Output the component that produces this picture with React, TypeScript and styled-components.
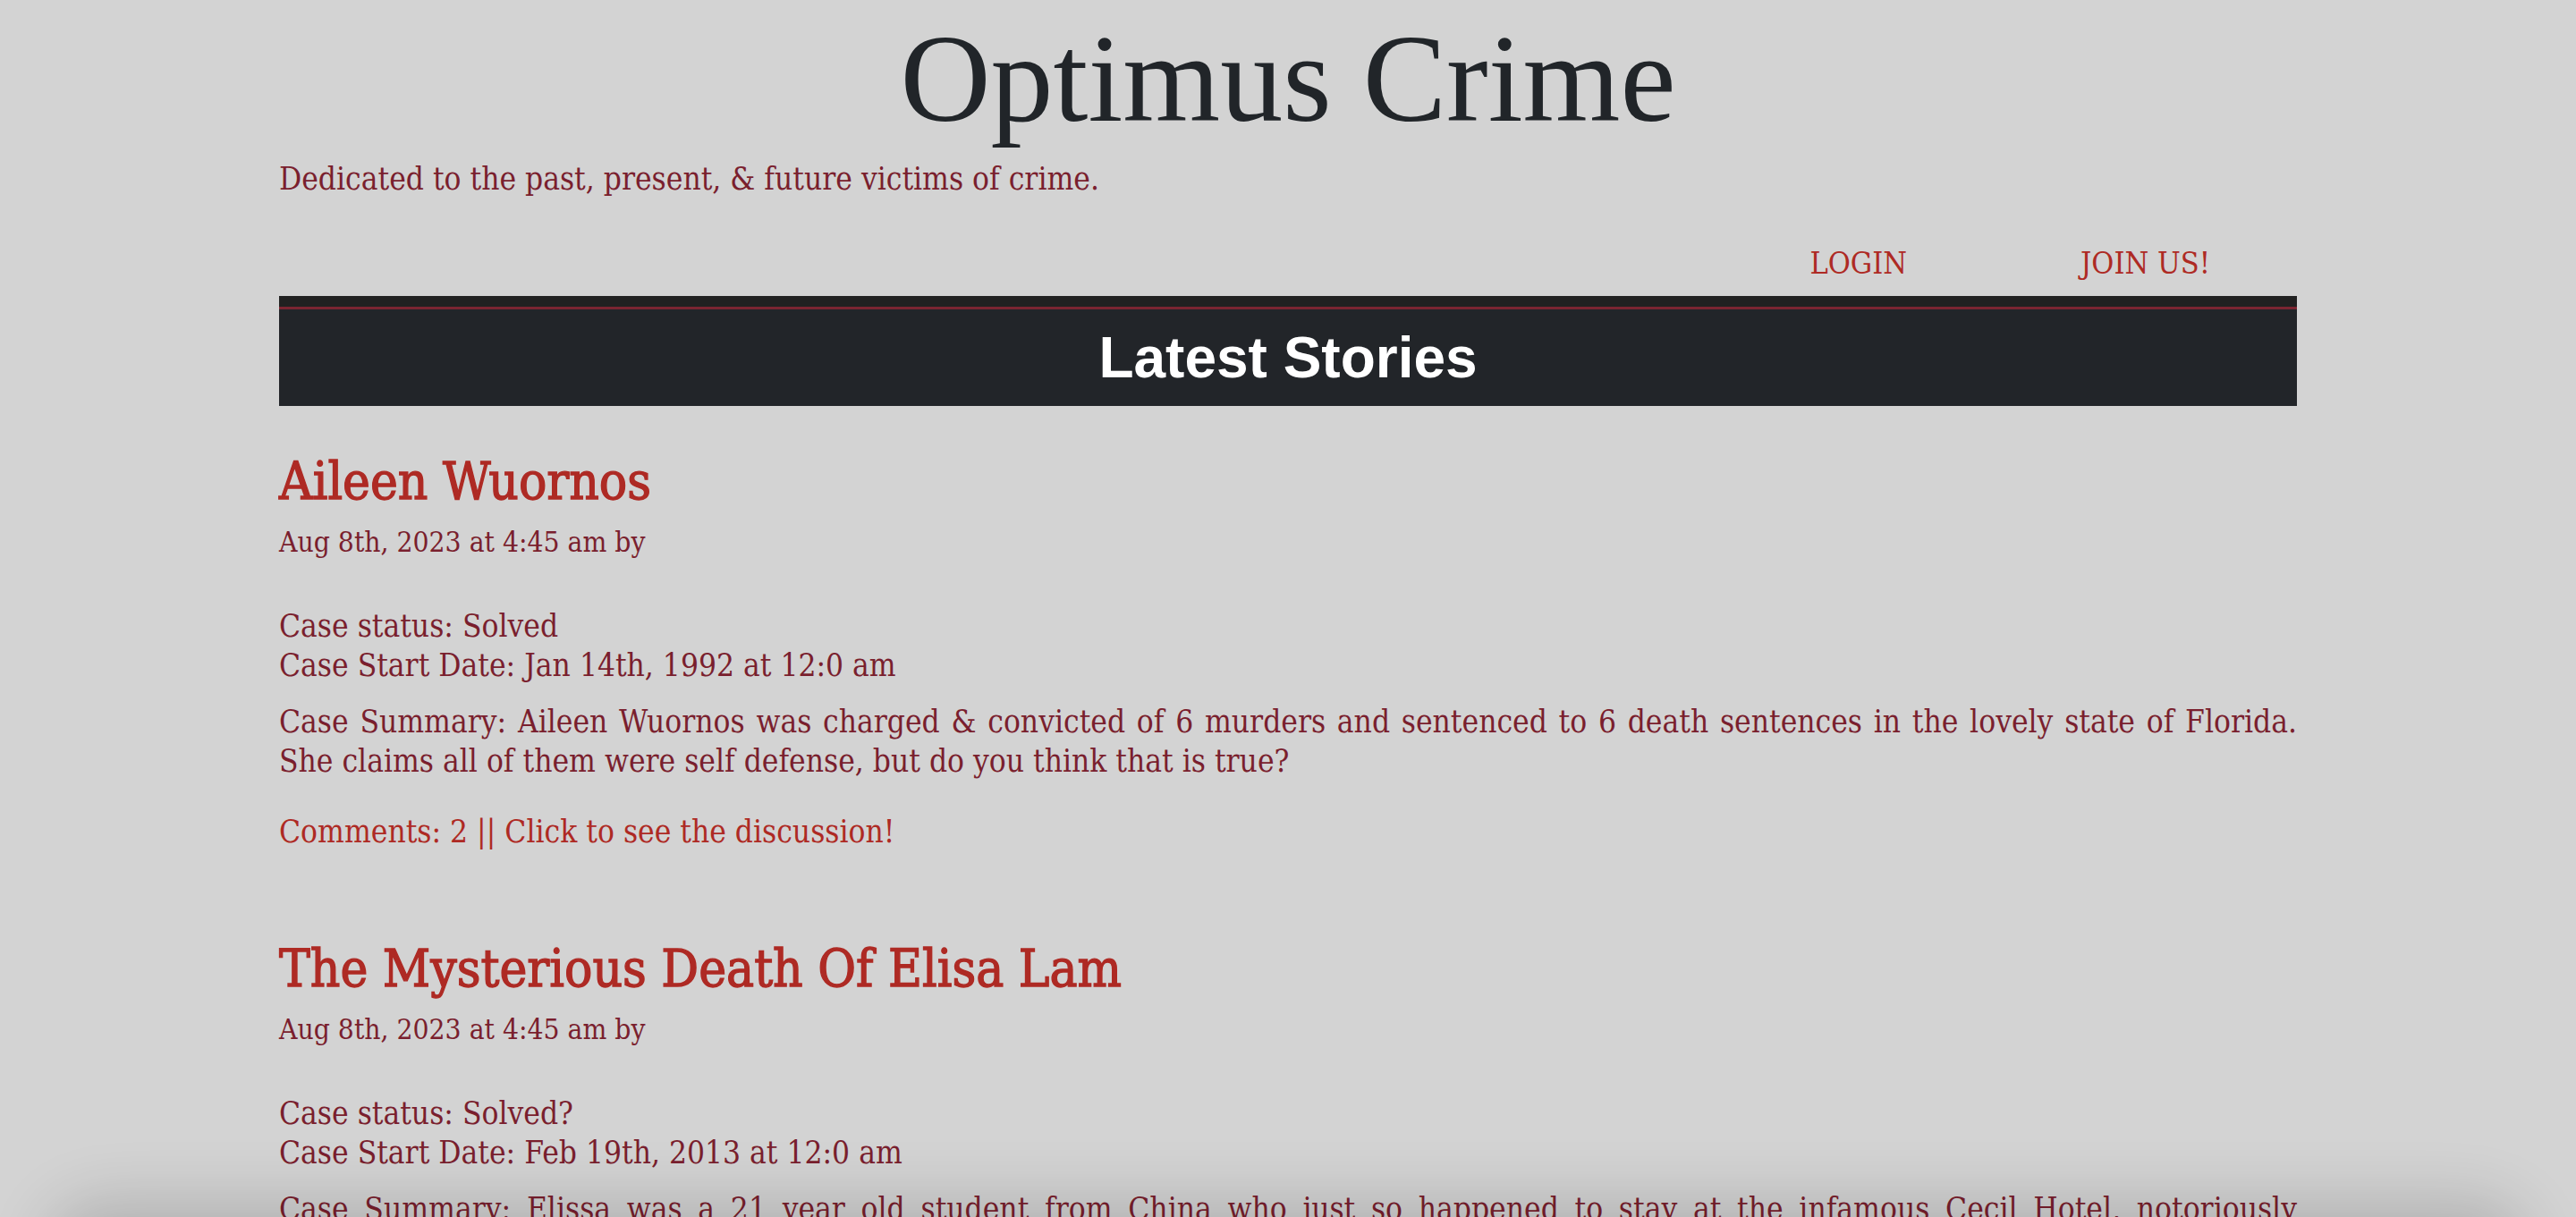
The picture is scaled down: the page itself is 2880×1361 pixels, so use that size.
import React from "react";
import styled, { createGlobalStyle } from "styled-components";

const Global = createGlobalStyle`
  html, body {
    margin: 0;
    padding: 0;
    background: #d3d3d3;
  }
  body {
    font-family: "DejaVu Serif Condensed", "DejaVu Serif", serif;
    font-stretch: condensed;
    color: #7a1f2e;
  }
`;

const Page = styled.div`
  width: 2256px;
  margin: 0 auto;
  display: flex;
  flex-direction: column;
`;

const Masthead = styled.header`
  display: flex;
  flex-direction: column;
`;

const Title = styled.h1`
  margin: 0;
  padding-top: 8px;
  font-family: "Liberation Serif", "Times New Roman", serif;
  font-weight: 400;
  font-size: 140px;
  line-height: 160px;
  color: #212529;
  text-align: center;
`;

const Tagline = styled.p`
  margin: 10px 0 0;
  font-size: 35px;
  line-height: 44px;
  color: #7a1f2e;
`;

const Nav = styled.nav`
  display: flex;
  justify-content: flex-end;
  margin-top: 50px;
`;

const NavLink = styled.a`
  padding: 0 97px;
  font-size: 34px;
  line-height: 44px;
  color: #ae2a24;
  text-decoration: none;
`;

const Banner = styled.div`
  margin-top: 15px;
  border-top: 12px solid #212121;
`;

const BannerTitle = styled.h2`
  margin: 0;
  height: 108px;
  border-top: 3px solid #7b2531;
  background: #222529;
  color: #ffffff;
  font-family: "Liberation Sans", Arial, sans-serif;
  font-weight: 700;
  font-size: 64px;
  line-height: 108px;
  text-align: center;
`;

const Story = styled.article`
  display: flex;
  flex-direction: column;
  margin-top: 50px;
  & + & {
    margin-top: 97px;
  }
`;

const StoryTitle = styled.h3`
  margin: 0;
  font-size: 58px;
  line-height: 68px;
  font-weight: 400;
  -webkit-text-stroke: 1.3px #ae2a24;
  color: #ae2a24;
`;

const Meta = styled.p`
  margin: 14px 0 0;
  font-size: 31.5px;
  line-height: 40px;
  color: #7a1f2e;
`;

const Facts = styled.div`
  margin-top: 52px;
  display: flex;
  flex-direction: column;
`;

const Fact = styled.span`
  font-size: 35px;
  line-height: 44px;
  color: #7a1f2e;
`;

const Summary = styled.p`
  margin: 19px 0 0;
  font-size: 35px;
  line-height: 44px;
  text-align: justify;
  color: #7a1f2e;
`;

const Comments = styled.a`
  margin-top: 35px;
  font-size: 35px;
  line-height: 44px;
  color: #ae2a24;
  text-decoration: none;
`;

const BottomShade = styled.div`
  position: fixed;
  left: 70px;
  right: 70px;
  bottom: -90px;
  height: 90px;
  border-radius: 60px;
  box-shadow: 0 0 70px 18px rgba(0, 0, 0, 0.16);
  pointer-events: none;
`;

type StoryData = {
  title: string;
  posted: string;
  status: string;
  start: string;
  summary: string;
  comments: number;
};

const stories: StoryData[] = [
  {
    title: "Aileen Wuornos",
    posted: "Aug 8th, 2023 at 4:45 am by",
    status: "Solved",
    start: "Jan 14th, 1992 at 12:0 am",
    summary:
      "Aileen Wuornos was charged & convicted of 6 murders and sentenced to 6 death sentences in the lovely state of Florida. She claims all of them were self defense, but do you think that is true?",
    comments: 2,
  },
  {
    title: "The Mysterious Death Of Elisa Lam",
    posted: "Aug 8th, 2023 at 4:45 am by",
    status: "Solved?",
    start: "Feb 19th, 2013 at 12:0 am",
    summary:
      "Elissa was a 21 year old student from China who just so happened to stay at the infamous Cecil Hotel, notoriously associated with murders, suicides and strange happenings. She was found dead in the water tank on the roof of the hotel weeks after she went missing.",
    comments: 0,
  },
];

export default function App() {
  return (
    <>
      <Global />
      <Page>
        <Masthead>
          <Title>Optimus Crime</Title>
          <Tagline>Dedicated to the past, present, &amp; future victims of crime.</Tagline>
          <Nav>
            <NavLink href="#">LOGIN</NavLink>
            <NavLink href="#">JOIN US!</NavLink>
          </Nav>
        </Masthead>
        <Banner>
          <BannerTitle>Latest Stories</BannerTitle>
        </Banner>
        {stories.map((s) => (
          <Story key={s.title}>
            <StoryTitle>{s.title}</StoryTitle>
            <Meta>{s.posted}</Meta>
            <Facts>
              <Fact>Case status: {s.status}</Fact>
              <Fact>Case Start Date: {s.start}</Fact>
            </Facts>
            <Summary>Case Summary: {s.summary}</Summary>
            <Comments href="#">
              Comments: {s.comments} || Click to see the discussion!
            </Comments>
          </Story>
        ))}
      </Page>
      <BottomShade />
    </>
  );
}
